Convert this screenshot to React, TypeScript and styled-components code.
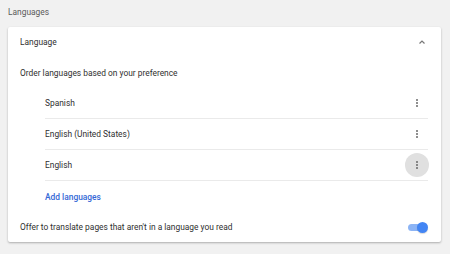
import * as React from "react";
import styled, { createGlobalStyle } from "styled-components";

const Global = createGlobalStyle`
  html, body {
    margin: 0;
    background: #f1f1f1;
    font-family: Roboto, "Liberation Sans", sans-serif;
    font-size: 8.4px;
    color: #2f2f2f;
  }
`;

const Page = styled.main`
  width: 450px;
  height: 254px;
  padding: 0 9px 0 8px;
  box-sizing: border-box;
`;

const SectionTitle = styled.h2`
  margin: 0;
  height: 27px;
  display: flex;
  align-items: center;
  font-size: 8.4px;
  font-weight: 400;
  color: #5a5a5a;
  padding-bottom: 3px;
  box-sizing: border-box;
`;

const Card = styled.section`
  background: #fff;
  border-radius: 2px;
  box-shadow: 0 1px 2px rgba(0, 0, 0, 0.22), 0 1px 3px rgba(0, 0, 0, 0.08);
`;

const Row = styled.div<{ $h?: number }>`
  height: ${p => p.$h ?? 30}px;
  display: flex;
  align-items: center;
  padding: 0 12px;
`;

const Grow = styled.span`
  flex: 1 1 0;
`;

const List = styled.div`
  padding: 0 13px 0 37px;
`;

const Item = styled.div`
  height: 31px;
  display: flex;
  align-items: center;
  border-bottom: 1px solid #eaeaea;
  box-sizing: border-box;
`;

const AddRow = styled.div`
  height: 31px;
  display: flex;
  align-items: center;
`;

const AddLink = styled.a`
  color: #3367d6;
  font-weight: 500;
  text-decoration: none;
`;

const Kebab = styled.button<{ $active?: boolean }>`
  width: 24px;
  height: 24px;
  margin-right: -1px;
  border: 0;
  padding: 0;
  border-radius: 50%;
  background: ${p => (p.$active ? "#e0e0e0" : "transparent")};
  display: flex;
  flex-direction: column;
  align-items: center;
  justify-content: center;
  gap: 1px;
`;

const Dot = styled.span`
  width: 2px;
  height: 2px;
  border-radius: 1px;
  background: #6a6a6a;
`;

const Chevron = styled.svg`
  margin-right: 3px;
`;

const Toggle = styled.div`
  position: relative;
  width: 16px;
  height: 7px;
  border-radius: 4px;
  background: #8cb4f5;
  margin-right: 5px;
`;

const Knob = styled.span`
  position: absolute;
  right: -4px;
  top: -2px;
  width: 11px;
  height: 11px;
  border-radius: 50%;
  background: #4285f4;
  box-shadow: 0 1px 1px rgba(0, 0, 0, 0.15);
`;

const languages = ["Spanish", "English (United States)", "English"];

const Dots = ({ active }: { active?: boolean }) => (
  <Kebab $active={active}>
    <Dot />
    <Dot />
    <Dot />
  </Kebab>
);

export default function App() {
  return (
    <Page>
      <Global />
      <SectionTitle>Languages</SectionTitle>
      <Card>
        <Row $h={30}>
          <Grow>Language</Grow>
          <Chevron width="8" height="6" viewBox="0 0 8 6">
            <path d="M1.5 4.5 L4 2 L6.5 4.5" fill="none" stroke="#777" strokeWidth="1.2" />
          </Chevron>
        </Row>
        <Row $h={31}>Order languages based on your preference</Row>
        <List>
          {languages.map((l, i) => (
            <Item key={l}>
              <Grow>{l}</Grow>
              <Dots active={i === 2} />
            </Item>
          ))}
          <AddRow>
            <AddLink href="#">Add languages</AddLink>
          </AddRow>
        </List>
        <Row $h={30}>
          <Grow>Offer to translate pages that aren't in a language you read</Grow>
          <Toggle>
            <Knob />
          </Toggle>
        </Row>
      </Card>
    </Page>
  );
}
